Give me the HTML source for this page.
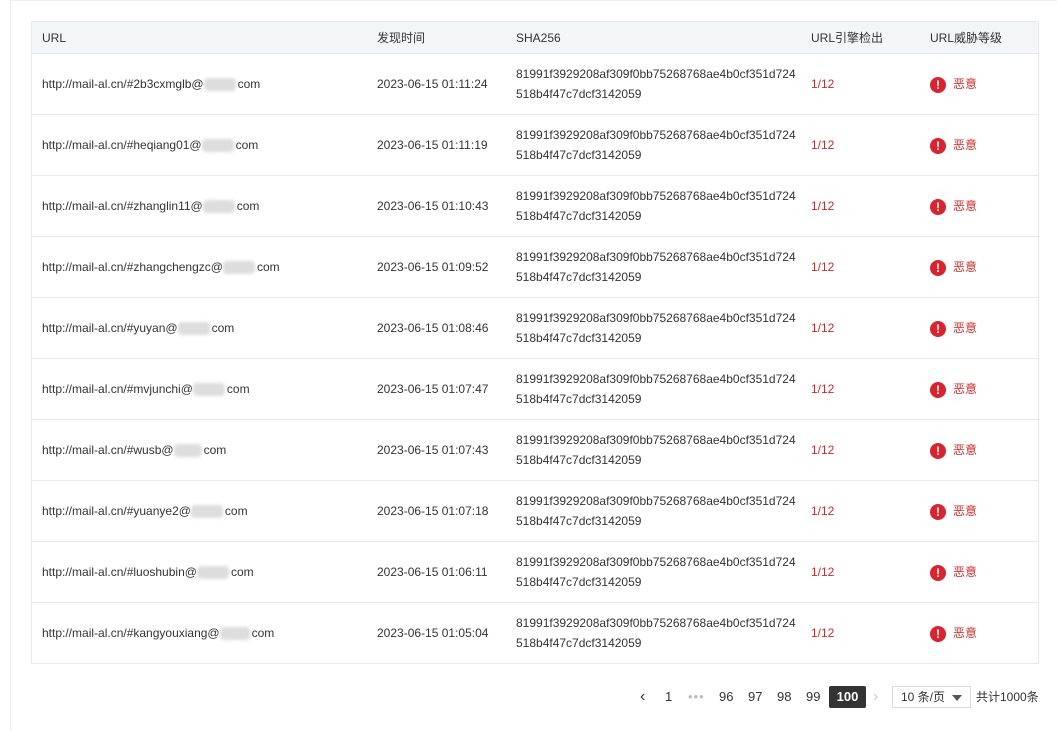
<!DOCTYPE html>
<html><head><meta charset="utf-8"><style>
body{margin:0;width:1057px;height:722px;background:#fff;font-family:"Liberation Sans","Noto Sans CJK SC",sans-serif;font-size:12px;color:#333;position:relative;overflow:hidden}
.frame{position:absolute;left:10px;top:0;width:1060px;height:730px;border-left:1px solid #eee;border-top:1px solid #eee}
table{position:absolute;left:31px;top:21px;width:1008px;border-collapse:collapse;border:1px solid #e6e8eb}
th{background:#f4f5f7;height:31px;font-weight:normal;text-align:left;color:#333;border-bottom:1px solid #e6e8eb;padding:0}
td{height:60px;border-bottom:1px solid #e6e8eb;padding:0;line-height:20px;vertical-align:middle}
.c1{padding-left:10px;width:335px}.c2{width:139px}.c3{width:295px}.c4{width:119px}
.red{color:#cc2a2a}
.blur{display:inline-block;height:13px;background:#ddd;vertical-align:middle;border-radius:4px;filter:blur(1.5px);margin-right:2px}
.ic{display:inline-block;width:16px;height:16px;border-radius:50%;background:#d9232e;color:#fff;font-weight:bold;font-size:12px;line-height:16px;text-align:center;vertical-align:middle;margin-right:7px}
.pg{position:absolute;top:686px;height:22px;line-height:22px;font-size:13px;color:#333}
</style></head><body>
<div class="frame"></div>
<table>
<tr><th class="c1">URL</th><th class="c2">发现时间</th><th class="c3">SHA256</th><th class="c4">URL引擎检出</th><th>URL威胁等级</th></tr>
<tr><td class="c1">http://mail-al.cn/#2b3cxmglb@<span class="blur" style="width:32px"></span>com</td><td>2023-06-15 01:11:24</td><td>81991f3929208af309f0bb75268768ae4b0cf351d724<br>518b4f47c7dcf3142059</td><td class="red">1/12</td><td class="red"><span class="ic">!</span>恶意</td></tr>
<tr><td class="c1">http://mail-al.cn/#heqiang01@<span class="blur" style="width:32px"></span>com</td><td>2023-06-15 01:11:19</td><td>81991f3929208af309f0bb75268768ae4b0cf351d724<br>518b4f47c7dcf3142059</td><td class="red">1/12</td><td class="red"><span class="ic">!</span>恶意</td></tr>
<tr><td class="c1">http://mail-al.cn/#zhanglin11@<span class="blur" style="width:32px"></span>com</td><td>2023-06-15 01:10:43</td><td>81991f3929208af309f0bb75268768ae4b0cf351d724<br>518b4f47c7dcf3142059</td><td class="red">1/12</td><td class="red"><span class="ic">!</span>恶意</td></tr>
<tr><td class="c1">http://mail-al.cn/#zhangchengzc@<span class="blur" style="width:32px"></span>com</td><td>2023-06-15 01:09:52</td><td>81991f3929208af309f0bb75268768ae4b0cf351d724<br>518b4f47c7dcf3142059</td><td class="red">1/12</td><td class="red"><span class="ic">!</span>恶意</td></tr>
<tr><td class="c1">http://mail-al.cn/#yuyan@<span class="blur" style="width:32px"></span>com</td><td>2023-06-15 01:08:46</td><td>81991f3929208af309f0bb75268768ae4b0cf351d724<br>518b4f47c7dcf3142059</td><td class="red">1/12</td><td class="red"><span class="ic">!</span>恶意</td></tr>
<tr><td class="c1">http://mail-al.cn/#mvjunchi@<span class="blur" style="width:32px"></span>com</td><td>2023-06-15 01:07:47</td><td>81991f3929208af309f0bb75268768ae4b0cf351d724<br>518b4f47c7dcf3142059</td><td class="red">1/12</td><td class="red"><span class="ic">!</span>恶意</td></tr>
<tr><td class="c1">http://mail-al.cn/#wusb@<span class="blur" style="width:28px"></span>com</td><td>2023-06-15 01:07:43</td><td>81991f3929208af309f0bb75268768ae4b0cf351d724<br>518b4f47c7dcf3142059</td><td class="red">1/12</td><td class="red"><span class="ic">!</span>恶意</td></tr>
<tr><td class="c1">http://mail-al.cn/#yuanye2@<span class="blur" style="width:32px"></span>com</td><td>2023-06-15 01:07:18</td><td>81991f3929208af309f0bb75268768ae4b0cf351d724<br>518b4f47c7dcf3142059</td><td class="red">1/12</td><td class="red"><span class="ic">!</span>恶意</td></tr>
<tr><td class="c1">http://mail-al.cn/#luoshubin@<span class="blur" style="width:32px"></span>com</td><td>2023-06-15 01:06:11</td><td>81991f3929208af309f0bb75268768ae4b0cf351d724<br>518b4f47c7dcf3142059</td><td class="red">1/12</td><td class="red"><span class="ic">!</span>恶意</td></tr>
<tr><td class="c1">http://mail-al.cn/#kangyouxiang@<span class="blur" style="width:30px"></span>com</td><td>2023-06-15 01:05:04</td><td>81991f3929208af309f0bb75268768ae4b0cf351d724<br>518b4f47c7dcf3142059</td><td class="red">1/12</td><td class="red"><span class="ic">!</span>恶意</td></tr>
</table>
<div class="pg" style="left:640px;font-size:16px">&lsaquo;</div>
<div class="pg" style="left:665px">1</div>
<div class="pg" style="left:688px;color:#bbb;letter-spacing:1px">•••</div>
<div class="pg" style="left:719px">96</div>
<div class="pg" style="left:748px">97</div>
<div class="pg" style="left:777px">98</div>
<div class="pg" style="left:806px">99</div>
<div class="pg" style="left:829px;width:37px;background:#333;color:#fff;font-weight:bold;text-align:center;border-radius:2px">100</div>
<div class="pg" style="left:873px;color:#ccc;font-size:16px">&rsaquo;</div>
<div class="pg" style="left:892px;width:79px;height:22px;border:1px solid #d9d9d9;box-sizing:border-box;padding-left:8px;font-size:12px;line-height:20px">10 条/页<span style="position:absolute;right:8px;top:8px;border-left:5px solid transparent;border-right:5px solid transparent;border-top:6px solid #555"></span></div>
<div class="pg" style="left:976px;font-size:12px">共计1000条</div>
</body></html>
